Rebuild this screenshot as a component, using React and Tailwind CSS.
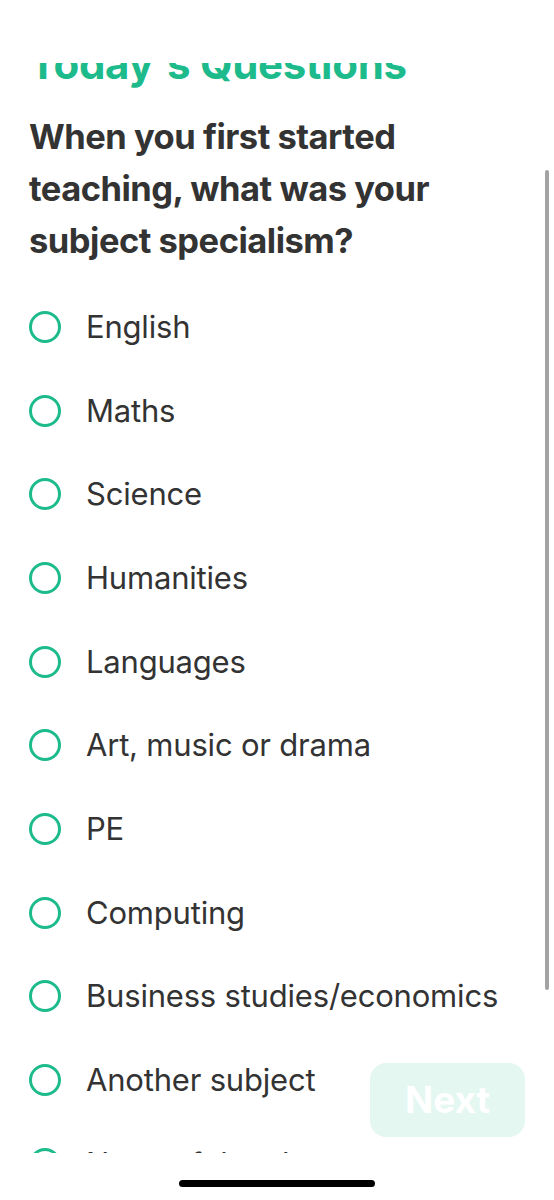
import React from 'react';

const OPTIONS = [
  'English',
  'Maths',
  'Science',
  'Humanities',
  'Languages',
  'Art, music or drama',
  'PE',
  'Computing',
  'Business studies/economics',
  'Another subject',
  'None of the above',
];

const FONT = { fontFamily: 'Inter, "Noto Sans", sans-serif' };

function Radio() {
  return <span className="block h-[32px] w-[32px] shrink-0 rounded-full border-[3px] border-[#1dbb8c]" />;
}

export default function App() {
  return (
    <div className="relative h-[1200px] w-[554px] overflow-hidden bg-white" style={FONT}>
      {/* status bar area */}
      <div className="h-[63px] bg-white" />

      {/* scrolling content */}
      <div className="relative h-[1090px] overflow-hidden">
        <div className="-mt-[24px] px-[29px]">
          <h1 className="text-[42px] font-bold leading-[50px] tracking-[-0.3px] text-[#1dbb8c]">
            Today's Questions
          </h1>
          <h2 className="mt-[22px] text-[34.5px] font-bold leading-[52px] tracking-[-0.5px] text-[#333333]">
            When you first started teaching, what was your subject specialism?
          </h2>
          <ul className="mt-[18px] flex flex-col">
            {OPTIONS.map(o => (
              <li key={o} className="flex h-[83.7px] items-center gap-[25px]">
                <Radio />
                <span className="text-[31px] leading-[38px] tracking-[-0.2px] text-[#333333]">{o}</span>
              </li>
            ))}
          </ul>
        </div>

        {/* scrollbar */}
        <div className="absolute right-[5px] top-[107px] h-[820px] w-[4px] rounded-full bg-[#a3a3a3]" />
      </div>

      {/* Next button */}
      <button className="absolute left-[370px] top-[1063px] flex h-[74px] w-[155px] items-center justify-center rounded-[16px] bg-[#e5f7f1] text-[37px] font-bold text-white">
        Next
      </button>

      {/* home indicator */}
      <div className="flex h-[47px] items-start justify-center pt-[27px]">
        <div className="h-[7px] w-[196px] rounded-full bg-black" />
      </div>
    </div>
  );
}
